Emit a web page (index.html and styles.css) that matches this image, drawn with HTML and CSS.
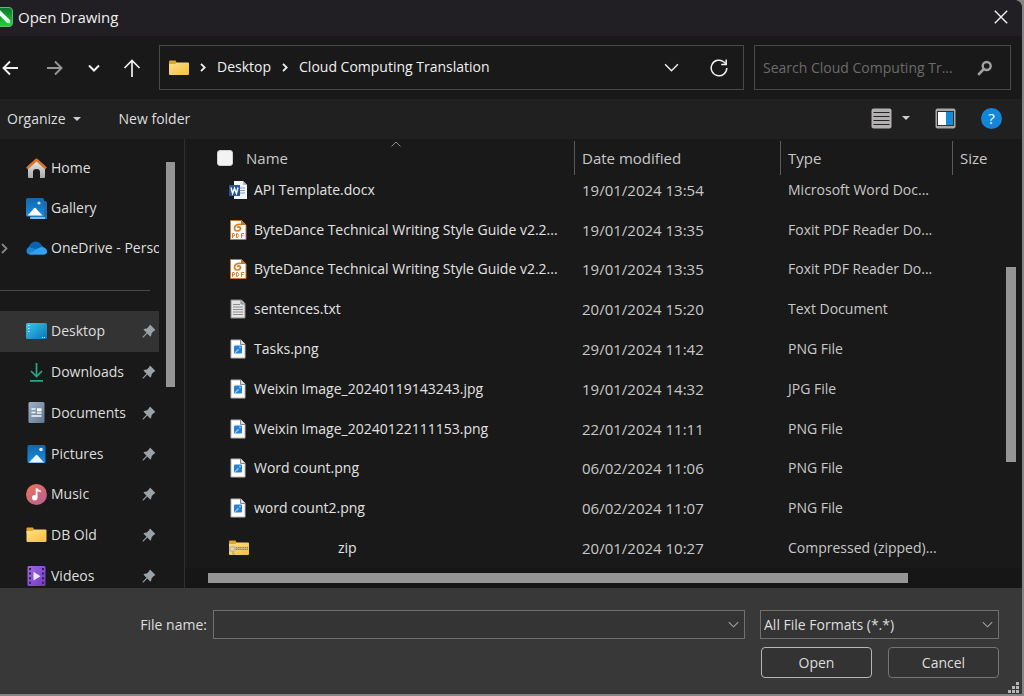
FILE: index.html
```html
<!DOCTYPE html>
<html lang="en">
<head>
<meta charset="utf-8">
<title>Open Drawing</title>
<link rel="stylesheet" href="styles.css">
</head>
<body>
<svg class="defs" width="0" height="0" aria-hidden="true">
  <defs>
    <linearGradient id="g-folder" x1="0" y1="0" x2="1" y2="1"><stop offset="0" stop-color="#ffe08a"/><stop offset="1" stop-color="#f5bf3c"/></linearGradient>
    <linearGradient id="g-green" x1="0" y1="0" x2="0" y2="1"><stop offset="0" stop-color="#06752a"/><stop offset="1" stop-color="#22d43c"/></linearGradient>
    <linearGradient id="g-blue" x1="0" y1="0" x2="0" y2="1"><stop offset="0" stop-color="#1267ae"/><stop offset="1" stop-color="#178ddf"/></linearGradient>
    <linearGradient id="g-desk" x1="0" y1="0" x2="1" y2="1"><stop offset="0" stop-color="#39c6ea"/><stop offset="1" stop-color="#0b75b8"/></linearGradient>
    <linearGradient id="g-house" x1="0" y1="0" x2="0" y2="1"><stop offset="0" stop-color="#efefef"/><stop offset="1" stop-color="#a9a9a9"/></linearGradient>
    <linearGradient id="g-doc" x1="0" y1="0" x2="1" y2="1"><stop offset="0" stop-color="#a0b3c7"/><stop offset="1" stop-color="#62788f"/></linearGradient>
    <linearGradient id="g-music" x1="0" y1="0" x2="1" y2="1"><stop offset="0" stop-color="#ed7658"/><stop offset="1" stop-color="#b45c96"/></linearGradient>
    <linearGradient id="g-video" x1="0" y1="0" x2="1" y2="1"><stop offset="0" stop-color="#a168e8"/><stop offset="1" stop-color="#6f3cc0"/></linearGradient>
    <symbol id="folder" viewBox="0 0 20 16"><path d="M0 1.500Q0 .5 1 .5h5.500L8 3v3H0z" fill="#e0a52c"/><path d="M0 4h6l2-1.500h11q1 0 1 1V14q0 1-1 1H1q-1 0-1-1z" fill="url(#g-folder)"/></symbol>
    <symbol id="pin" viewBox="0 0 14 14"><path d="M8.300.8 13.200 5.700Q13.200 6.800 12 6.700L9.600 9.200Q9.700 11.500 8.400 12.700L5.300 9.600 1.500 13.400.6 13.600.8 12.500 4.500 8.700 1.400 5.600Q2.800 4.300 4.900 4.400L7.300 2Q7.200.9 8.300.8Z" fill="#9aa3a8"/></symbol>
    <symbol id="chevron" viewBox="0 0 14 8"><path d="m1 1 6 6 6-6" fill="none" stroke="currentColor" stroke-width="1.300"/></symbol>
    <symbol id="crumb" viewBox="0 0 6 9"><path d="m1 .8 3.700 3.700L1 8.200" fill="none" stroke="currentColor" stroke-width="1.800"/></symbol>
    <symbol id="f-word" viewBox="0 0 18 20"><path d="M5 1h9l4 4v14H5z" fill="#f4f6f9"/><path d="M14 1v4h4z" fill="#aeb9c9"/><path d="M11 8h5M11 10.500h5M11 13h5" stroke="#7d9ccb"/><path d="M0 5h11v11H0z" fill="#2a5699"/><path d="m2 7.500 1.600 6 1.900-5.300 1.900 5.300 1.600-6" fill="none" stroke="#fff" stroke-width="1.400"/></symbol>
    <symbol id="f-pdf" viewBox="0 0 18 22"><path d="M1.500 1.500h11L17 6v14.500H1.500z" fill="#fff" stroke="#c8752b"/><path d="M12 1v5h5z" fill="#c8752b"/><path d="M12 5.500Q5.500 5 5.500 9.500c0 3 5 3.500 6 .5.700-2-2.500-2.800-3.200-1" fill="none" stroke="#d67e28" stroke-width="1.700"/><path d="M3.500 19v-4.500H5q1.500 1.200 0 2.500H3.500M7.500 14.500v4h1q2.500-2 0-4zM12.500 19v-4.500H15M12.500 16.500h2" fill="none" stroke="#d67e28"/></symbol>
    <symbol id="f-txt" viewBox="0 0 16 20"><path d="M1 1h10.500L15 4.500V19H1z" fill="#e3e3e3" stroke="#8b8b8b"/><path d="M11 1v4h4" fill="#bbb" stroke="#888"/><path d="M3 5.500h7M3 8h10M3 10.500h10M3 13h10M3 15.500h10" stroke="#8d8d8d"/></symbol>
    <symbol id="f-img" viewBox="0 0 16 20"><path d="M1 1h10l4 4v14H1z" fill="#fff" stroke="#b8b8b8"/><path d="M10.500 1v4.500H15" fill="#ddd" stroke="#888"/><rect x="4" y="6.500" width="8" height="8" rx="1" fill="#2583d0"/><path d="M4.500 13.500 8 10l1 1-3.500 3z" fill="#a5d5fa"/><circle cx="10" cy="8.400" r=".9" fill="#8ccaff"/></symbol>
    <symbol id="f-zip" viewBox="0 0 20 16"><use href="#folder"/><path d="M5 8.500h14.500" stroke="#7d7347" stroke-width="3" stroke-dasharray="1.300 .8"/><path d="M5 8.500h14.500" stroke="#c4b884"/><circle cx="3.300" cy="9" r="2.500" fill="none" stroke="#b8b8b8" stroke-width="1.500"/><path d="M4 11v3h2" fill="none" stroke="#aaa" stroke-width="1.500"/></symbol>
    <symbol id="i-pic" viewBox="0 0 20 20"><rect x="1" y="1" width="18" height="18" rx="1.500" fill="url(#g-blue)"/><path d="M2.500 18.500 9.500 11q.6-.6 1.200 0l6.800 7.500z" fill="#e9f5ff"/><circle cx="14.500" cy="5.500" r="1.800" fill="#dff1ff"/></symbol>
  </defs>
</svg>

<main class="dialog">
  <header class="titlebar">
    <svg class="app-icon" width="13" height="20" viewBox="7 0 13 20"><rect x=".5" y=".5" width="19" height="19" rx="3.500" fill="url(#g-green)" stroke="#6bb57c"/><path d="m4 3 11 11" stroke="#f2fff2" stroke-width="4" stroke-linecap="round"/><path d="m14 13 3 3" stroke="#baffc0" stroke-width="2"/></svg>
    <h1 class="title">Open Drawing</h1>
    <button class="icon-btn close" aria-label="Close"><svg width="14" height="14" viewBox="0 0 14 14"><path d="m.8.8 12.400 12.400M13.200.8.8 13.200" stroke="currentColor" stroke-width="1.400"/></svg></button>
  </header>

  <div class="navbar">
    <div class="history">
      <button class="icon-btn" aria-label="Back"><svg width="16" height="16" viewBox="0 0 16 16"><path d="M16 8H1.500M8 1.500 1.500 8 8 14.500" fill="none" stroke="currentColor" stroke-width="1.900"/></svg></button>
      <button class="icon-btn forward" aria-label="Forward"><svg width="16" height="16" viewBox="0 0 16 16"><path d="M0 8h14.500M8 1.500 14.500 8 8 14.500" fill="none" stroke="currentColor" stroke-width="1.900"/></svg></button>
      <button class="icon-btn" aria-label="Recent locations"><svg width="12" height="8" viewBox="0 0 12 8"><path d="m1 1.500 5 5 5-5" fill="none" stroke="currentColor" stroke-width="2"/></svg></button>
      <button class="icon-btn" aria-label="Up"><svg width="18" height="18" viewBox="0 0 18 18"><path d="M9 18V1.500M1.500 9 9 1.500 16.500 9" fill="none" stroke="currentColor" stroke-width="1.700"/></svg></button>
    </div>
    <div class="address">
      <svg width="20" height="16"><use href="#folder"/></svg>
      <svg class="sep" width="6" height="9"><use href="#crumb"/></svg>
      <a class="crumb" href="#desktop">Desktop</a>
      <svg class="sep" width="6" height="9"><use href="#crumb"/></svg>
      <a class="crumb" href="#translation">Cloud Computing Translation</a>
      <button class="icon-btn previous" aria-label="Previous locations"><svg width="15" height="9"><use href="#chevron"/></svg></button>
      <button class="icon-btn" aria-label="Refresh"><svg width="18" height="18" viewBox="0 0 18 18"><path d="M16.800 9A7.800 7.800 0 1 1 14 3L16 5" fill="none" stroke="currentColor" stroke-width="1.500"/><path d="M16.200.5v5h-5" fill="none" stroke="currentColor" stroke-width="1.500"/></svg></button>
    </div>
    <div class="search">
      <input class="search-input" type="text" aria-label="Search" placeholder="Search Cloud Computing Tr...">
      <svg width="16" height="16" viewBox="0 0 16 16"><circle cx="9.700" cy="6" r="4" fill="none" stroke="#a0a0a0" stroke-width="2.400"/><path d="m6.800 9-5.600 5.800" stroke="#a0a0a0" stroke-width="2.600"/></svg>
    </div>
  </div>

  <div class="toolbar">
    <button class="text-btn">Organize <span class="caret"></span></button>
    <button class="text-btn">New folder</button>
    <div class="tools">
      <button class="icon-btn" aria-label="View"><svg width="21" height="21" viewBox="0 0 21 21"><rect x=".5" y=".5" width="20" height="20" rx="2" fill="#b3b0b1"/><path d="M2.500 4.500h16M2.500 8.500h16M2.500 12.500h16M2.500 16.500h16" stroke="#242424"/></svg></button>
      <button class="icon-btn" aria-label="More views"><span class="caret"></span></button>
      <button class="icon-btn preview" aria-label="Preview pane"><svg width="21" height="21" viewBox="0 0 21 21"><rect x=".5" y=".5" width="20" height="20" rx="2" fill="#aaa7a8"/><path d="M2 3h17v15H2z" fill="#303030"/><path d="M3 4h8v13H3z" fill="#fff"/><path d="M11 4h7v13h-7z" fill="#168bd8"/></svg></button>
      <button class="help" aria-label="Help">?</button>
    </div>
  </div>

  <div class="content">
    <nav class="sidebar" aria-label="Places">
      <div class="places">
        <a class="place" href="#home"><svg width="21" height="20" viewBox="0 0 21 20"><path d="M2 8 10.500 1 19 8v11q0 1-1 1h-4v-6q0-3-3.500-3T7 14v6H3q-1 0-1-1z" fill="url(#g-house)"/><path d="m1 10.500 9.500-8.700 9.500 8.700" fill="none" stroke="#df7426" stroke-width="2.600" stroke-linejoin="round"/></svg><span>Home</span></a>
        <a class="place" href="#gallery"><svg width="21" height="21" viewBox="0 0 21 21"><path d="M4 3h15q2 0 2 2v16H5z" fill="#236ba6"/><path d="M4 20h15" stroke="#a6d4f6" stroke-width="1.500"/><rect width="18" height="18.500" rx="1.500" fill="url(#g-blue)"/><path d="m1.500 17.500 6.700-7.300q.8-.7 1.500 0l6.800 7.300z" fill="#fff"/><circle cx="13" cy="5" r="1.600" fill="#bde8ff"/></svg><span>Gallery</span></a>
        <a class="place" href="#onedrive"><svg class="expand" width="7" height="11" viewBox="0 0 7 11"><path d="m1 1 4.500 4.500L1 10" fill="none" stroke="#858585" stroke-width="1.800"/></svg><svg width="21" height="14" viewBox="0 0 21 14"><path d="M4 13.500C0 13.500-1 8 3 6 5 1 10-1 14.500 3L17 6q4 1 4 4.500-.5 3-3.500 3z" fill="#1686d8"/><path d="M3 6C5 1 10-1 14 2.500l2 3-6 2.800z" fill="#0b62ae"/><path d="m3 12.800 9-5.300q6-3 8.500 1.500 1.500 4.500-3 4.500H4z" fill="#32a4ef"/></svg><span class="place-name">OneDrive - Perso</span></a>
      </div>
      <hr class="rule">
      <div class="pinned">
        <a class="place current" href="#desktop"><svg width="21" height="16" viewBox="0 0 21 16"><rect width="21" height="16" rx="1.500" fill="url(#g-desk)"/><path d="M2 2.500h1.500M2 5.500h1.500M2 8.500h1.500M16 14.500h1M18 14.500h1" stroke="#c2f3ff" stroke-width="1.200"/></svg><span>Desktop</span><svg class="pin" width="14" height="14"><use href="#pin"/></svg></a>
        <a class="place" href="#downloads"><svg width="21" height="20" viewBox="0 0 21 20"><path d="M10.500 1v13M5 9l5.500 5.500L16 9M4 18.800h13" fill="none" stroke="#24a887" stroke-width="1.700"/></svg><span>Downloads</span><svg class="pin" width="14" height="14"><use href="#pin"/></svg></a>
        <a class="place" href="#documents"><svg width="21" height="21" viewBox="0 0 21 21"><rect x="2.500" width="16" height="21" rx="1.500" fill="url(#g-doc)"/><path d="M5.500 7h4M5.500 10.500h4M5.500 14h10M11 11h4.500" stroke="#f4f8fb" stroke-width="1.400"/><path d="M11 6.300h4.500v3H11z" fill="#fff"/></svg><span>Documents</span><svg class="pin" width="14" height="14"><use href="#pin"/></svg></a>
        <a class="place" href="#pictures"><svg width="21" height="20"><use href="#i-pic"/></svg><span>Pictures</span><svg class="pin" width="14" height="14"><use href="#pin"/></svg></a>
        <a class="place" href="#music"><svg width="21" height="21" viewBox="0 0 21 21"><circle cx="10.500" cy="10.500" r="10.500" fill="url(#g-music)"/><circle cx="8.700" cy="13.700" r="2.700" fill="#fff"/><path d="M10.600 13.500V4.500q1 2.500 4.200 2.800" fill="none" stroke="#fff" stroke-width="1.800"/></svg><span>Music</span><svg class="pin" width="14" height="14"><use href="#pin"/></svg></a>
        <a class="place" href="#dbold"><svg width="21" height="16"><use href="#folder"/></svg><span>DB Old</span><svg class="pin" width="14" height="14"><use href="#pin"/></svg></a>
        <a class="place" href="#videos"><svg width="21" height="20" viewBox="0 0 21 20"><rect x="1.500" width="18" height="20" rx="1.500" fill="url(#g-video)"/><path d="M4 2v17M17 2v17" stroke="#34204f" stroke-width="2" stroke-dasharray="2 2.600"/><path d="m7.500 5.800 7 4.400-7 4.400z" fill="#f1e6ff"/></svg><span>Videos</span><svg class="pin" width="14" height="14"><use href="#pin"/></svg></a>
      </div>
    </nav>
    <div class="side-scroll"><div class="side-thumb"></div></div>

    <section class="files" aria-label="Files">
      <div class="list">
        <table class="table">
          <colgroup><col><col class="col-date"><col class="col-type"><col class="col-size"></colgroup>
          <thead>
            <tr>
              <th class="sorted"><span class="head-name"><input class="check" type="checkbox" id="all"><label for="all">Name</label></span><svg class="sort" width="10" height="6" viewBox="0 0 10 6"><path d="m.5 5.500 4.500-4.500 4.500 4.500" fill="none" stroke="#8c8c8c"/></svg></th>
              <th class="split">Date modified</th><th class="split">Type</th><th class="split">Size</th>
            </tr>
          </thead>
          <tbody>
            <tr><td><span class="file"><svg width="18" height="20"><use href="#f-word"/></svg><span class="name">API Template.docx</span></span></td><td class="date">19/01/2024 13:54</td><td>Microsoft Word Doc...</td><td></td></tr>
            <tr><td><span class="file"><svg width="18" height="22"><use href="#f-pdf"/></svg><span class="name">ByteDance Technical Writing Style Guide v2.2...</span></span></td><td class="date">19/01/2024 13:35</td><td>Foxit PDF Reader Do...</td><td></td></tr>
            <tr><td><span class="file"><svg width="18" height="22"><use href="#f-pdf"/></svg><span class="name">ByteDance Technical Writing Style Guide v2.2...</span></span></td><td class="date">19/01/2024 13:35</td><td>Foxit PDF Reader Do...</td><td></td></tr>
            <tr><td><span class="file"><svg width="18" height="20"><use href="#f-txt"/></svg><span class="name">sentences.txt</span></span></td><td class="date">20/01/2024 15:20</td><td>Text Document</td><td></td></tr>
            <tr><td><span class="file"><svg width="18" height="20"><use href="#f-img"/></svg><span class="name">Tasks.png</span></span></td><td class="date">29/01/2024 11:42</td><td>PNG File</td><td></td></tr>
            <tr><td><span class="file"><svg width="18" height="20"><use href="#f-img"/></svg><span class="name">Weixin Image_20240119143243.jpg</span></span></td><td class="date">19/01/2024 14:32</td><td>JPG File</td><td></td></tr>
            <tr><td><span class="file"><svg width="18" height="20"><use href="#f-img"/></svg><span class="name">Weixin Image_20240122111153.png</span></span></td><td class="date">22/01/2024 11:11</td><td>PNG File</td><td></td></tr>
            <tr><td><span class="file"><svg width="18" height="20"><use href="#f-img"/></svg><span class="name">Word count.png</span></span></td><td class="date">06/02/2024 11:06</td><td>PNG File</td><td></td></tr>
            <tr><td><span class="file"><svg width="18" height="20"><use href="#f-img"/></svg><span class="name">word count2.png</span></span></td><td class="date">06/02/2024 11:07</td><td>PNG File</td><td></td></tr>
            <tr><td><span class="file"><svg width="20" height="16"><use href="#f-zip"/></svg><span class="name masked">zip</span></span></td><td class="date">20/01/2024 10:27</td><td>Compressed (zipped)...</td><td></td></tr>
          </tbody>
        </table>
        <div class="v-scroll"><div class="v-thumb"></div></div>
      </div>
      <div class="h-scroll"><div class="h-thumb"></div></div>
    </section>
  </div>

  <form class="footer">
    <label class="file-label" for="filename">File name:</label>
    <div class="combo">
      <input class="field" id="filename" type="text">
      <svg class="combo-arrow" width="11" height="7"><use href="#chevron"/></svg>
    </div>
    <div class="combo">
      <select class="field" aria-label="File format"><option>All File Formats (*.*)</option></select>
      <svg class="combo-arrow" width="11" height="7"><use href="#chevron"/></svg>
    </div>
    <div class="actions">
      <button class="action primary" type="button">Open</button>
      <button class="action" type="button">Cancel</button>
    </div>
    <svg class="grip" width="11" height="11" viewBox="0 0 11 11"><path d="M8 0h3v3H8zM4 4h3v3H4zM8 4h3v3H8zM0 8h3v3H0zM4 8h3v3H4zM8 8h3v3H8z" fill="#b5b5b5"/></svg>
  </form>
</main>
</body>
</html>
```
FILE: styles.css
```css
* { box-sizing: border-box; }

body {
  margin: 0;
  height: 100vh;
  padding: 0 2px 2px 0;
  background: #858585;
  color: #dedede;
  font: 14px/20px "Open Sans", "Noto Sans", sans-serif;
  overflow: hidden;
}

.defs { position: absolute; }
svg { display: block; flex: none; }
button, input, select { font: inherit; color: inherit; }
a { color: inherit; text-decoration: none; }

.dialog {
  display: flex;
  flex-direction: column;
  height: 100%;
  background: #191919;
  border-top-right-radius: 8px;
  overflow: hidden;
}

.icon-btn, .text-btn {
  display: flex;
  align-items: center;
  justify-content: center;
  padding: 0;
  border: 0;
  background: none;
}

/* Title bar */
.titlebar {
  display: flex;
  align-items: center;
  gap: 5px;
  height: 36px;
  padding: 0 14px 2px 0;
  background: #211f23;
}
.title { margin: 0; flex: 1; font-size: 15px; font-weight: 400; color: #f0f0f0; }
.close { color: #f0f0f0; }

/* Navigation */
.navbar {
  display: flex;
  align-items: center;
  height: 63px;
  padding-right: 11px;
}
.history { display: flex; gap: 18px; margin-right: 17px; }
.history .icon-btn { width: 20px; height: 32px; color: #f0f0f0; }
.history .forward { margin: 0 1px 0 7px; color: #979797; }

.address, .search {
  display: flex;
  align-items: center;
  height: 45px;
  border: 1px solid #464b49;
}
.address {
  flex: 1;
  min-width: 0;
  gap: 11px;
  padding: 0 15px 0 9px;
  margin-right: 10px;
  color: #f0f0f0;
}
.crumb { padding-bottom: 2px; white-space: nowrap; }
.previous { margin-left: auto; margin-right: 20px; }
.search { width: 257px; padding: 0 17px 0 8px; }
.search-input {
  flex: 1;
  min-width: 0;
  padding: 0;
  border: 0;
  outline: 0;
  background: none;
}
.search-input::placeholder { color: #6b6b6b; opacity: 1; }

/* Toolbar */
.toolbar {
  display: flex;
  align-items: center;
  gap: 38px;
  height: 40px;
  padding: 0 20px 0 7px;
  background: #202020;
}
.text-btn { gap: 7px; }
.caret {
  border: 4px solid transparent;
  border-top-color: #cfcfcf;
  border-bottom: 0;
}
.tools { display: flex; align-items: center; gap: 10px; margin-left: auto; padding-bottom: 2px; }
.preview { margin: 0 15px; }
.help {
  width: 21px;
  height: 21px;
  padding: 0;
  border: 0;
  border-radius: 50%;
  background: #1286d9;
  color: #fff;
  font-size: 15px;
  line-height: 20px;
}

/* Sidebar */
.content { display: flex; flex: 1; min-height: 0; }
.sidebar {
  display: flex;
  flex-direction: column;
  width: 159px;
  padding-top: 9px;
  overflow: hidden;
}
.place {
  position: relative;
  display: flex;
  flex: 1;
  align-items: center;
  gap: 4px;
  height: 41px;
  padding: 0 3px 0 26px;
}
.place-name { white-space: nowrap; }
.places .place { flex: none; height: 40px; }
.expand { position: absolute; left: 1px; }
.pin { margin-left: auto; }
.rule { width: 150px; height: 1px; margin: 22px 0 20px; border: 0; background: #494949; }
.pinned { display: flex; flex: 1; flex-direction: column; margin-bottom: -8px; }
.current { background: #333; }

.side-scroll { width: 26px; padding: 23px 9px 0 7px; border-right: 1px solid #303030; }
.side-thumb { height: 225px; background: #959595; }

/* File list */
.files { display: flex; flex: 1; flex-direction: column; min-width: 0; }
.list { display: flex; flex: 1; min-height: 0; }
.table {
  flex: 1;
  width: 100%;
  height: 100%;
  table-layout: fixed;
  border-collapse: collapse;
}
.col-date { width: 206px; }
.col-type { width: 172px; }
.col-size { width: 54px; }
th, td { padding: 0 0 0 8px; text-align: left; white-space: nowrap; color: #c8c8c8; }
th { position: relative; height: 31px; padding-top: 7px; font-size: 15px; font-weight: 400; }
td { height: 39px; }
.date { font-size: 15px; }
.split::before {
  content: "";
  position: absolute;
  top: 2px;
  left: 0;
  width: 1px;
  height: 34px;
  background: #5a5a5a;
}
.head-name { display: flex; align-items: center; gap: 13px; padding-left: 24px; }
.check {
  appearance: none;
  width: 16px;
  height: 16px;
  margin: 0;
  border: 1px solid #cfcfcf;
  border-radius: 3px;
  background: #f3f3f3;
}
.sort { position: absolute; top: 2px; left: 206px; }
.file { display: flex; align-items: center; gap: 7px; height: 22px; padding-left: 36px; color: #e2e2e2; }
.masked { padding-left: 82px; }

.v-scroll { width: 16px; padding-top: 128px; }
.v-thumb { width: 10px; height: 195px; background: #959595; }
.h-scroll { height: 20px; padding: 5px 114px 0 23px; background: #161616; }
.h-thumb { height: 10px; background: #959595; }

/* Footer */
.footer {
  position: relative;
  display: grid;
  grid-template-columns: 207px 1fr 239px;
  gap: 8px 15px;
  align-content: start;
  align-items: center;
  padding: 22px 23px 16px 0;
  background: #383838;
}
.file-label { text-align: right; }
.file-label + .combo { margin-left: -9px; }
.combo { position: relative; }
.field {
  display: block;
  width: 100%;
  height: 29px;
  padding: 0 26px 0 3px;
  border: 1px solid #707070;
  border-radius: 0;
  outline: 0;
  appearance: none;
  background: #343434;
}
.combo-arrow { position: absolute; top: 11px; right: 6px; color: #a5a5a5; pointer-events: none; }
.actions { grid-column: 3; display: flex; justify-content: space-between; padding-left: 1px; }
.action {
  width: 111px;
  height: 31px;
  padding: 0;
  border: 1px solid #757575;
  border-radius: 4px;
  background: #333;
}
.primary { border-color: #b5b5b5; }
.grip { position: absolute; right: 3px; bottom: 1px; }
```
